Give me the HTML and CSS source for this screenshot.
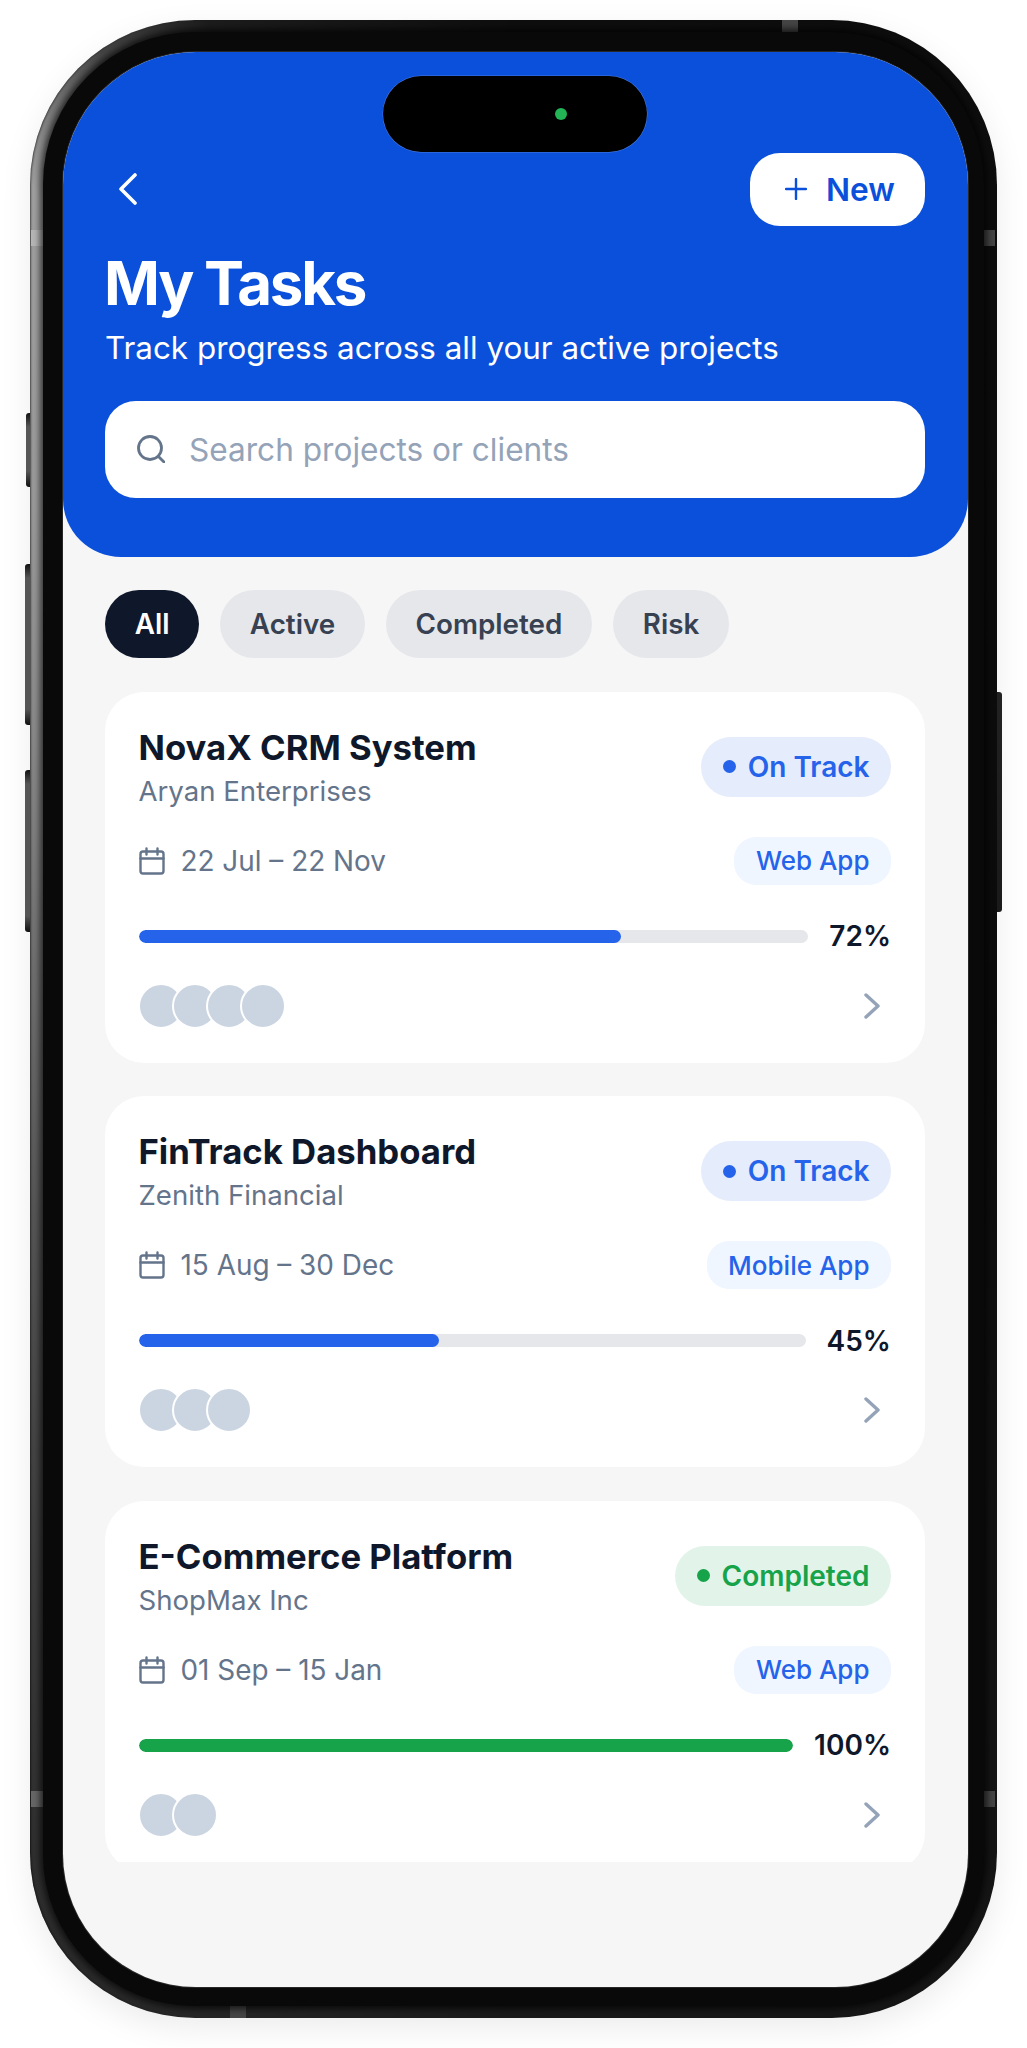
FILE: index.html
```html
<!DOCTYPE html>
<html lang="en">
<head>
<meta charset="utf-8">
<title>My Tasks</title>
<link rel="stylesheet" href="styles.css">
</head>
<body>
<div class="phone">
  <span class="btn btn-silent"></span>
  <span class="btn btn-up"></span>
  <span class="btn btn-down"></span>
  <span class="btn btn-power"></span>
  <span class="band band-top"></span>
  <span class="band band-l1"></span>
  <span class="band band-r1"></span>
  <span class="band band-bottom"></span>
  <span class="band band-l2"></span>
  <span class="band band-r2"></span>
  <div class="bezel">
    <div class="screen">
      <div class="island"><span class="cam"></span></div>
      <header class="header">
        <div class="toprow">
          <svg class="back" viewBox="0 0 20 32" fill="none" stroke="#fff" stroke-width="3.6" stroke-linecap="round" stroke-linejoin="round"><path d="M17 2 3 16l14 14"/></svg>
          <button class="newbtn">
            <svg class="plus" viewBox="0 0 22 22" fill="none" stroke="#0b50da" stroke-width="2.4" stroke-linecap="round"><path d="M11 1v20M1 11h20"/></svg>
            <span>New</span>
          </button>
        </div>
        <h1 class="title">My Tasks</h1>
        <p class="subtitle">Track progress across all your active projects</p>
        <div class="search">
          <svg class="search-icon" viewBox="0 0 28 28" fill="none" stroke="#64748b" stroke-width="2.8" stroke-linecap="round" stroke-linejoin="round"><circle cx="13" cy="13" r="11.5"/><path d="m27 27-5.8-5.8"/></svg>
          <span class="placeholder">Search projects or clients</span>
        </div>
      </header>
      <main class="content">
        <nav class="chips">
          <span class="chip chip-on">All</span>
          <span class="chip">Active</span>
          <span class="chip">Completed</span>
          <span class="chip">Risk</span>
        </nav>
        <section class="card">
          <div class="row row-top">
            <div>
              <h2 class="name">NovaX CRM System</h2>
              <p class="client">Aryan Enterprises</p>
            </div>
            <span class="status status-blue"><i class="dot"></i>On Track</span>
          </div>
          <div class="row row-meta">
            <span class="date">
              <svg class="cal" viewBox="0 0 26 28" fill="none" stroke="#64748b" stroke-width="2.4" stroke-linecap="round" stroke-linejoin="round"><rect x="1.5" y="4.5" width="23" height="22" rx="2.5"/><path d="M7.5 1.5v6M18.5 1.5v6M1.5 11.5h23"/></svg>
              22 Jul – 22 Nov
            </span>
            <span class="tag">Web App</span>
          </div>
          <div class="progress">
            <div class="track"><div class="fill" style="width:72%"></div></div>
            <span class="pct">72%</span>
          </div>
          <div class="row row-foot">
            <div class="avatars"><i></i><i></i><i></i><i></i></div>
            <svg class="chev" viewBox="0 0 16 26" fill="none" stroke="#94a3b8" stroke-width="3.4" stroke-linecap="round" stroke-linejoin="round"><path d="m2 2 12 11L2 24"/></svg>
          </div>
        </section>
        <section class="card">
          <div class="row row-top">
            <div>
              <h2 class="name">FinTrack Dashboard</h2>
              <p class="client">Zenith Financial</p>
            </div>
            <span class="status status-blue"><i class="dot"></i>On Track</span>
          </div>
          <div class="row row-meta">
            <span class="date">
              <svg class="cal" viewBox="0 0 26 28" fill="none" stroke="#64748b" stroke-width="2.4" stroke-linecap="round" stroke-linejoin="round"><rect x="1.5" y="4.5" width="23" height="22" rx="2.5"/><path d="M7.5 1.5v6M18.5 1.5v6M1.5 11.5h23"/></svg>
              15 Aug – 30 Dec
            </span>
            <span class="tag">Mobile App</span>
          </div>
          <div class="progress">
            <div class="track"><div class="fill" style="width:45%"></div></div>
            <span class="pct">45%</span>
          </div>
          <div class="row row-foot">
            <div class="avatars"><i></i><i></i><i></i></div>
            <svg class="chev" viewBox="0 0 16 26" fill="none" stroke="#94a3b8" stroke-width="3.4" stroke-linecap="round" stroke-linejoin="round"><path d="m2 2 12 11L2 24"/></svg>
          </div>
        </section>
        <section class="card">
          <div class="row row-top">
            <div>
              <h2 class="name">E-Commerce Platform</h2>
              <p class="client">ShopMax Inc</p>
            </div>
            <span class="status status-green"><i class="dot"></i>Completed</span>
          </div>
          <div class="row row-meta">
            <span class="date">
              <svg class="cal" viewBox="0 0 26 28" fill="none" stroke="#64748b" stroke-width="2.4" stroke-linecap="round" stroke-linejoin="round"><rect x="1.5" y="4.5" width="23" height="22" rx="2.5"/><path d="M7.5 1.5v6M18.5 1.5v6M1.5 11.5h23"/></svg>
              01 Sep – 15 Jan
            </span>
            <span class="tag">Web App</span>
          </div>
          <div class="progress">
            <div class="track"><div class="fill fill-green" style="width:100%"></div></div>
            <span class="pct">100%</span>
          </div>
          <div class="row row-foot">
            <div class="avatars"><i></i><i></i></div>
            <svg class="chev" viewBox="0 0 16 26" fill="none" stroke="#94a3b8" stroke-width="3.4" stroke-linecap="round" stroke-linejoin="round"><path d="m2 2 12 11L2 24"/></svg>
          </div>
        </section>
      </main>
    </div>
  </div>
</div>
</body>
</html>
```
FILE: styles.css
```css
* { box-sizing: border-box; }
html, body { margin: 0; background: #fff; }
body {
  width: 1027px;
  height: 2048px;
  padding: 20px 30px 0;
  overflow: hidden;
  font-family: Inter, "Liberation Sans", sans-serif;
}
.phone {
  position: relative;
  width: 967px;
  height: 1998px;
  padding: 12px 13px 12px 13px;
  border-radius: 165px;
  background: conic-gradient(#0e0e0e 0deg, #0b0b0b 90deg, #141414 150deg, #1a1a1a 180deg, #2a2a2a 205deg, #484848 232deg, #707070 277deg, #9a9a9a 317deg, #a0a0a0 330deg, #444 337deg, #1c1c1c 343deg, #0e0e0e 360deg);
  box-shadow: 0 10px 32px rgba(0,0,0,.08), inset 2px 0 2px -1px rgba(0,0,0,.55);
}
.bezel {
  position: relative;
  height: 100%;
  padding: 20px 16px 19px 19.5px;
  border-radius: 152px;
  background: #090909;
  box-shadow: 0 0 6px 3px rgba(0,0,0,.65);
}
.screen {
  position: relative;
  display: flex;
  flex-direction: column;
  height: 100%;
  overflow: hidden;
  border-radius: 133px;
  background: #f6f6f6;
  box-shadow: 0 0 0 1px rgba(150,150,150,.22);
}
.band { position: absolute; background: #444; }
.band-top { left: 752px; top: 0; width: 16px; height: 12px; }
.band-l1 { left: 1px; top: 210px; width: 12px; height: 16px; background: #b5b5b5; }
.band-r1 { right: 2px; top: 210px; width: 12px; height: 16px; }
.band-bottom { left: 200px; bottom: 0; width: 16px; height: 12px; }
.band-l2 { left: 1px; top: 1771px; width: 12px; height: 16px; background: #666; }
.band-r2 { right: 2px; top: 1771px; width: 12px; height: 16px; }
.btn {
  position: absolute;
  background: linear-gradient(180deg, #111 0, #555 14px, #555 calc(100% - 16px), #111 100%);
  border-radius: 3px 0 0 3px;
}
.btn-silent { left: -4px; top: 393px; width: 4px; height: 74px; }
.btn-up { left: -5px; top: 544px; width: 5px; height: 161px; }
.btn-down { left: -5px; top: 750px; width: 5px; height: 162px; }
.btn-power {
  right: -5px;
  top: 672px;
  width: 5px;
  height: 220px;
  border-radius: 0 3px 3px 0;
  background: linear-gradient(180deg, #222 0, #1a1a1a 100%);
}
.island {
  position: absolute;
  left: 320.5px;
  top: 23.5px;
  display: flex;
  width: 264px;
  height: 76px;
  align-items: center;
  border-radius: 38px;
  background: #000;
  box-shadow: 0 0 0 .5px rgba(255,255,255,.25);
}
.cam {
  width: 12px;
  height: 12px;
  margin-left: 171.5px;
  border-radius: 50%;
  background: #22b455;
}
.header {
  flex: none;
  height: 504.5px;
  padding: 100.5px 43px 0 42.5px;
  border-radius: 0 0 58px 58px;
  background: #0b50da;
  color: #fff;
}
.toprow {
  display: flex;
  height: 73.5px;
  align-items: center;
  justify-content: space-between;
}
.back { width: 20px; height: 32px; margin-left: 13px; }
.newbtn {
  display: flex;
  width: 175px;
  height: 73.5px;
  padding: 0 0 0 35px;
  align-items: center;
  gap: 19px;
  border: 0;
  border-radius: 30px;
  background: #fff;
  color: #0b50da;
  font: 600 31.7px Inter, sans-serif;
}
.plus { width: 22px; height: 22px; }
.title {
  margin: 0 0 0 -1px;
  padding-top: 21px;
  font-size: 60px;
  font-weight: 700;
  line-height: 72px;
  letter-spacing: -2.3px;
}
.subtitle {
  margin: 0;
  padding-top: 9px;
  font-size: 31.4px;
  font-weight: 400;
  line-height: 40px;
}
.search {
  display: flex;
  height: 97px;
  margin-top: 32.5px;
  padding-left: 32px;
  align-items: center;
  gap: 24px;
  border-radius: 31px;
  background: #fff;
}
.search-icon { width: 28px; height: 28px; }
.placeholder { color: #94a3b8; font-size: 31.6px; }
.content {
  flex: none;
  height: 1305px;
  padding: 33.5px 43px 0 42.5px;
  overflow: hidden;
}
.chips { display: flex; gap: 21px; margin-bottom: 33.5px; }
.chip {
  display: flex;
  height: 68px;
  padding: 0 29.7px;
  align-items: center;
  border-radius: 34px;
  background: #e5e7eb;
  color: #374151;
  font-size: 27.8px;
  font-weight: 600;
}
.chip-on { background: #0f172a; color: #fff; }
.card {
  height: 371px;
  margin-bottom: 33.5px;
  padding: 34px 34px 0 33.5px;
  border-radius: 39px;
  background: #fff;
}
.row { display: flex; justify-content: space-between; }
.row-top { height: 90px; align-items: flex-start; }
.name {
  margin: -1px 0 0;
  color: #0f172a;
  font-size: 34.7px;
  font-weight: 700;
  line-height: 44px;
}
.client {
  margin: 0;
  color: #64748b;
  font-size: 27.6px;
  line-height: 44px;
}
.status {
  display: flex;
  height: 60px;
  margin-top: 11px;
  padding: 0 21.5px;
  align-items: center;
  gap: 12px;
  border-radius: 30px;
  font-size: 28px;
  font-weight: 600;
}
.status-blue { background: #e5ecfc; color: #2563eb; }
.status-green { background: #e2f4ea; color: #16a34a; }
.dot { width: 13px; height: 13px; border-radius: 50%; background: currentColor; }
.row-meta { height: 48px; margin-top: 21px; align-items: center; }
.date {
  display: flex;
  align-items: center;
  gap: 16px;
  color: #64748b;
  font-size: 27.9px;
}
.cal { width: 26px; height: 28px; }
.tag {
  display: flex;
  height: 48px;
  padding: 0 21.5px;
  align-items: center;
  border-radius: 22px;
  background: #eff6ff;
  color: #2563eb;
  font-size: 26px;
  font-weight: 500;
}
.progress {
  display: flex;
  height: 40px;
  margin-top: 31.5px;
  align-items: center;
  gap: 21px;
}
.track {
  flex: 1;
  height: 13px;
  overflow: hidden;
  border-radius: 7px;
  background: #e5e7eb;
}
.fill { height: 100%; border-radius: 7px; background: #2563eb; }
.fill-green { background: #16a34a; }
.pct {
  color: #0f172a;
  font-size: 28px;
  font-weight: 600;
}
.row-foot { height: 46px; margin-top: 26.5px; align-items: center; }
.avatars { display: flex; margin-left: -.5px; }
.avatars i {
  width: 46px;
  height: 46px;
  margin-right: -12px;
  border: 2px solid #fff;
  border-radius: 50%;
  background: #cbd5e1;
}
.chev { width: 16px; height: 26px; margin-right: 11px; }
```
